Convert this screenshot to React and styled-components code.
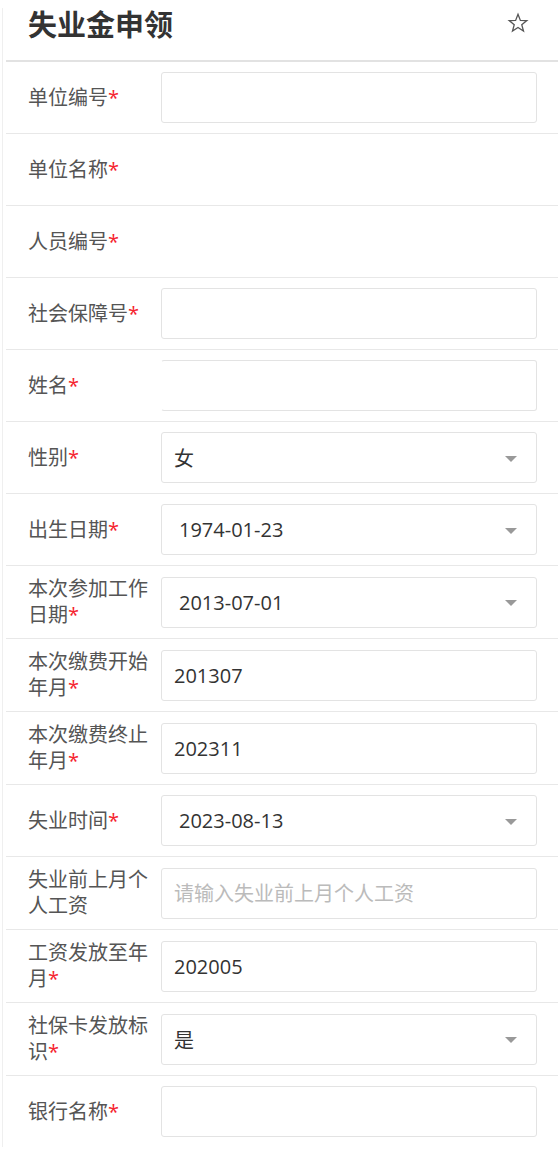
import React from 'react';
import styled, { createGlobalStyle } from 'styled-components';

const GlobalStyle = createGlobalStyle`
  body {
    margin: 0;
    background: #fff;
    font-family: "Open Sans", "Noto Sans CJK SC", sans-serif;
  }
`;

const Page = styled.div`
  margin: 8px 0 0 2px;
  padding-left: 3px;
  border-left: 1px solid #efefef;
`;

const Header = styled.div`
  display: flex;
  justify-content: space-between;
  align-items: flex-start;
  height: 52px;
  padding: 0 29px 0 22px;
  border-bottom: 2px solid #e2e2e2;
`;

const Title = styled.h1`
  margin: 0;
  font-size: 29px;
  line-height: 34px;
  font-weight: 700;
  color: #333;
`;

const StarButton = styled.span`
  display: flex;
  margin-top: 4px;
  color: #555;
`;

const Row = styled.div`
  display: flex;
  align-items: center;
  min-height: 51px;
  padding: 10px 21px 10px 22px;
  border-bottom: 1px solid #e8e8e8;

  &:last-child {
    border-bottom: none;
  }
`;

const Label = styled.div`
  flex: 0 0 133px;
  padding-right: 10px;
  box-sizing: border-box;
  font-size: 20px;
  line-height: 26px;
  color: #555;
`;

const Required = styled.span`
  color: #f5222d;
`;

const TextInput = styled.input`
  flex: 1;
  min-width: 0;
  height: 51px;
  box-sizing: border-box;
  padding: 0 12px;
  border: 1px solid #e3e3e3;
  border-left-color: ${p => (p.$noLeft ? 'transparent' : '#e3e3e3')};
  border-radius: 3px;
  font-family: inherit;
  font-size: 20px;
  color: #333;
  background: #fff;
  outline: none;

  &::placeholder {
    color: #bbb;
  }
`;

const Select = styled.div`
  flex: 1;
  height: 51px;
  box-sizing: border-box;
  display: flex;
  align-items: center;
  justify-content: space-between;
  padding: 0 19px 0 ${p => (p.$date ? '17px' : '12px')};
  border: 1px solid #e3e3e3;
  border-radius: 3px;
  font-size: 20px;
  color: #333;
`;

const Arrow = styled.span`
  width: 0;
  height: 0;
  border-left: 6px solid transparent;
  border-right: 6px solid transparent;
  border-top: 6px solid #999;
  margin-top: 2px;
`;

const fields = [
  { label: '单位编号', type: 'input' },
  { label: '单位名称' },
  { label: '人员编号' },
  { label: '社会保障号', type: 'input' },
  { label: '姓名', type: 'input', noLeft: true },
  { label: '性别', type: 'select', value: '女' },
  { label: '出生日期', type: 'date', value: '1974-01-23' },
  { label: '本次参加工作日期', type: 'date', value: '2013-07-01' },
  { label: '本次缴费开始年月', type: 'input', value: '201307' },
  { label: '本次缴费终止年月', type: 'input', value: '202311' },
  { label: '失业时间', type: 'date', value: '2023-08-13' },
  { label: '失业前上月个人工资', type: 'input', placeholder: '请输入失业前上月个人工资', optional: true },
  { label: '工资发放至年月', type: 'input', value: '202005' },
  { label: '社保卡发放标识', type: 'select', value: '是' },
  { label: '银行名称', type: 'input' },
];

const StarIcon = () => (
  <svg width="22" height="22" viewBox="0 0 24 24" fill="none" stroke="currentColor" strokeWidth="1.4" strokeLinejoin="miter">
    <polygon points="12,2.5 14.6,9.2 21.6,9.4 16.1,13.8 18,20.8 12,16.8 6,20.8 7.9,13.8 2.4,9.4 9.4,9.2" />
  </svg>
);

const Field = ({ field }) => {
  if (field.type === 'input') {
    return (
      <TextInput
        defaultValue={field.value || ''}
        placeholder={field.placeholder}
        $noLeft={field.noLeft}
        readOnly
      />
    );
  }
  if (field.type === 'select' || field.type === 'date') {
    return (
      <Select $date={field.type === 'date'}>
        <span>{field.value}</span>
        <Arrow />
      </Select>
    );
  }
  return null;
};

const App = () => (
  <>
    <GlobalStyle />
    <Page>
      <Header>
        <Title>失业金申领</Title>
        <StarButton>
          <StarIcon />
        </StarButton>
      </Header>
      {fields.map(field => (
        <Row key={field.label}>
          <Label>
            {field.label}
            {!field.optional && <Required>*</Required>}
          </Label>
          <Field field={field} />
        </Row>
      ))}
    </Page>
  </>
);

export default App;
